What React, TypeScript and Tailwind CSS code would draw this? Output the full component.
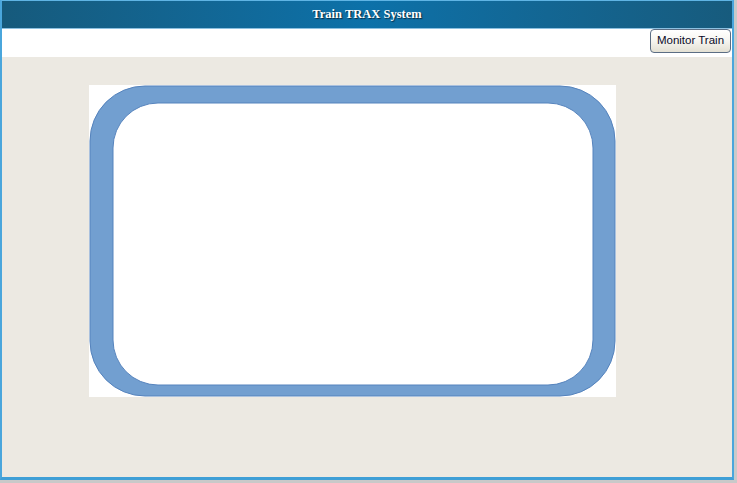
import React from "react";

function Track() {
  return (
    <svg width="527" height="312" viewBox="0 0 527 312" className="block bg-white">
      <path
        fillRule="evenodd"
        fill="#729fd0"
        stroke="#5583bd"
        strokeWidth="1"
        d="M56 1 H471 A55 55 0 0 1 526 56 V256 A55 55 0 0 1 471 311 H56 A55 55 0 0 1 1 256 V56 A55 55 0 0 1 56 1 Z M69 18 H459 A45 45 0 0 1 504 63 V255 A45 45 0 0 1 459 300 H69 A45 45 0 0 1 24 255 V63 A45 45 0 0 1 69 18 Z"
      />
    </svg>
  );
}

export default function App() {
  return (
    <div className="h-[483px] w-[737px] bg-[#c9c9c9]">
      <div className="flex h-[480px] w-[734px] flex-col border-x-2 border-b-[3px] border-t border-x-[#4aa6dc] border-b-[#3f9fd6] border-t-[#5fb4e4] bg-[#ece9e2]">
        <div
          className="flex h-[28px] shrink-0 items-center justify-center border-b border-[#8cc0e0] bg-gradient-to-r from-[#165a7c] via-[#0c71a9] to-[#175b7d] text-[12.5px] font-bold text-white"
          style={{ fontFamily: '"Liberation Serif", "Times New Roman", serif', textShadow: "1px 1px 1px #0a2a40" }}
        >
          Train TRAX System
        </div>
        <div className="flex h-[28px] shrink-0 items-start justify-end bg-white pr-px">
          <button
            type="button"
            className="h-[24px] w-[81px] rounded-[4px] border border-[#5b6d84] bg-gradient-to-b from-white via-[#f6f5f0] to-[#e3e0d3] text-[11.5px] text-[#0a0a28]"
            style={{ fontFamily: '"Liberation Sans", Tahoma, sans-serif' }}
          >
            Monitor Train
          </button>
        </div>
        <div className="flex-1 pl-[87px] pt-[28px]">
          <Track />
        </div>
      </div>
    </div>
  );
}
